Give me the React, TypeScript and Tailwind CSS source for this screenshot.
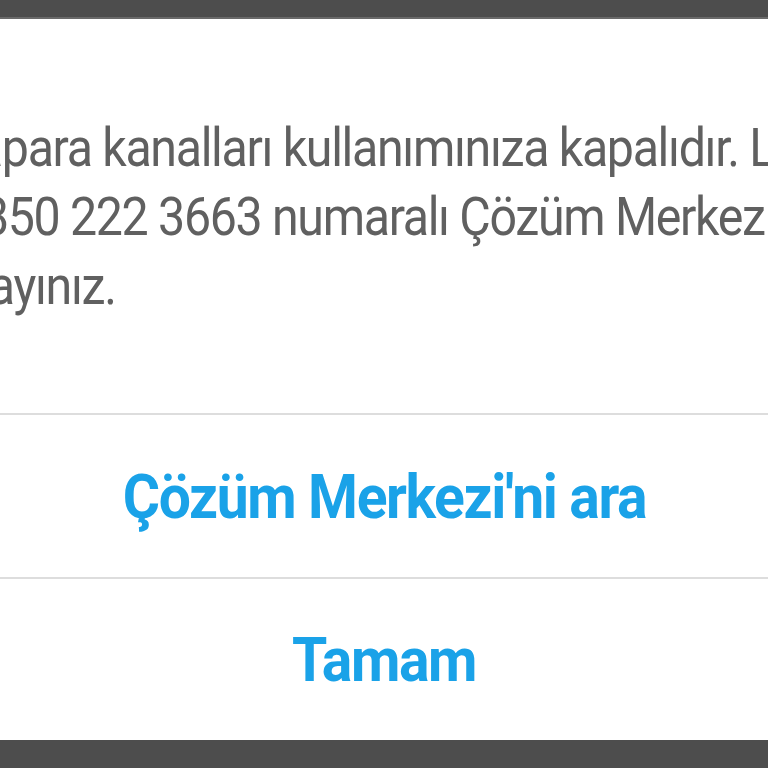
import React from 'react';

const LINES = [
  { text: 'Papara kanalları kullanımınıza kapalıdır. Lütfen', offset: '' },
  { text: "0850 222 3663 numaralı Çözüm Merkezi'ni", offset: 'ml-[9px]' },
  { text: 'arayınız.', offset: 'ml-[2px]' },
];

export default function App() {
  return (
    <div className="flex h-[768px] w-[768px] flex-col overflow-hidden bg-[#4d4d4d] font-['Roboto',sans-serif]">
      <div className="h-[19px] shrink-0 border-b-2 border-[#6a6a6a]" />
      <main className="flex flex-1 flex-col bg-white">
        <section className="h-[394px] overflow-hidden pt-[94px]">
          <div className="-ml-[52px] origin-left scale-x-[0.895] text-[54px] leading-[69px] tracking-[-1.5px] text-[#606060]">
            {LINES.map((line) => (
              <div key={line.text} className={`whitespace-nowrap ${line.offset}`}>{line.text}</div>
            ))}
          </div>
        </section>
        <div className="h-[2px] bg-[#dddddd]" />
        <button type="button" className="flex h-[162px] items-center justify-center">
          <span className="scale-x-[0.92] text-[62px] font-bold tracking-[-1.5px] text-[#1aa2e8]">Çözüm Merkezi'ni ara</span>
        </button>
        <div className="h-[2px] bg-[#dddddd]" />
        <button type="button" className="flex h-[160px] items-center justify-center">
          <span className="scale-x-[0.92] text-[62px] font-bold tracking-[-1.5px] text-[#1aa2e8]">Tamam</span>
        </button>
      </main>
      <div className="h-[28px] shrink-0" />
    </div>
  );
}
